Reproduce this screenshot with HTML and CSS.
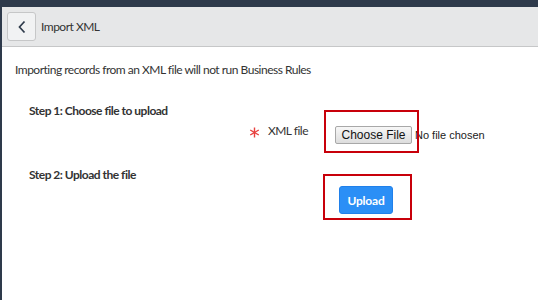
FILE: index.html
```html
<!DOCTYPE html>
<html lang="en">
<head>
  <meta charset="UTF-8">
  <meta name="viewport" content="width=device-width, initial-scale=1.0">
  <title>Import XML</title>
  <link rel="stylesheet" href="styles.css">
</head>
<body>
  <div class="topbar"></div>
  <div class="header">
    <button class="back-button" aria-label="Back">
      <svg width="10" height="14" viewBox="0 0 10 14"><path d="M7.5 1.5 L2.5 7 L7.5 12.5" fill="none" stroke="#2e3a4b" stroke-width="1.7"/></svg>
    </button>
    <span class="title">Import XML</span>
  </div>
  <div class="content">
    <p class="notice">Importing records from an XML file will not run Business Rules</p>
    <div class="step">
      <h4>Step 1: Choose file to upload</h4>
      <div class="field-row">
        <div class="field-label">
          <svg class="required" width="11" height="11" viewBox="0 0 11 11">
            <g stroke="#e8413f" stroke-width="1.4">
              <line x1="5.5" y1="0.5" x2="5.5" y2="10.5"/>
              <line x1="1.2" y1="3" x2="9.8" y2="8"/>
              <line x1="1.2" y1="8" x2="9.8" y2="3"/>
            </g>
          </svg>
          <span>XML file</span>
        </div>
        <div class="field-control">
          <button class="file-button">Choose File</button>
          <span class="file-name">No file chosen</span>
          <div class="highlight highlight-file"></div>
        </div>
      </div>
    </div>
    <div class="step">
      <h4>Step 2: Upload the file</h4>
      <div class="field-row">
        <div class="field-label"></div>
        <div class="field-control upload-control">
          <button class="upload-button">Upload</button>
          <div class="highlight highlight-upload"></div>
        </div>
      </div>
    </div>
  </div>
</body>
</html>
```

FILE: styles.css
```css
body {
  margin: 0;
  height: 300px;
  background: #fff;
  border-left: 2px solid #2e3a4b;
  font-family: 'Lato', sans-serif;
  letter-spacing: -0.5px;
  color: #333;
  box-sizing: border-box;
}
.topbar {
  height: 7px;
  background: #2e3a4b;
}
.header {
  display: flex;
  align-items: center;
  height: 39px;
  padding-left: 5px;
  background: #e6e7e8;
  border-bottom: 1px solid #c6c7c8;
}
.back-button {
  display: flex;
  align-items: center;
  justify-content: center;
  width: 29px;
  height: 29px;
  padding: 0;
  background: #f1f2f3;
  border: 1px solid #c6c7c8;
  border-radius: 3px;
}
.title {
  margin-left: 5px;
  font-size: 12px;
  color: #333;
}
.content {
  padding-left: 13px;
}
.notice {
  margin: 15px 0 0 0;
  font-size: 12px;
  line-height: 16px;
}
.step {
  padding-left: 14px;
}
.step h4 {
  margin: 0;
  font-size: 12px;
  font-weight: 700;
  line-height: 16px;
}
.step:first-of-type h4 {
  margin-top: 25px;
}
.step:last-of-type h4 {
  margin-top: 23px;
}
.field-row {
  display: flex;
}
.field-label {
  display: flex;
  align-items: center;
  justify-content: flex-end;
  width: 279px;
  height: 16px;
  font-size: 12px;
  line-height: 16px;
  margin-top: 4px;
}
.required {
  margin-right: 8px;
  margin-top: 2px;
}
.field-control {
  position: relative;
  display: flex;
  align-items: center;
  margin-left: 27px;
  margin-top: 7px;
  height: 18px;
}
.file-button {
  height: 18px;
  width: 77px;
  padding: 0;
  font-family: 'Liberation Sans', Arial, sans-serif;
  font-size: 12px;
  letter-spacing: 0;
  color: #111;
  background: linear-gradient(to bottom, #f7f7f7, #dddddd);
  border: 1px solid #a8a8a8;
  border-radius: 2px;
}
.file-name {
  margin-left: 3px;
  font-family: 'Liberation Sans', Arial, sans-serif;
  font-size: 11px;
  letter-spacing: 0;
  color: #222;
}
.upload-control {
  margin-left: 31px;
  margin-top: 3px;
  height: 28px;
}
.upload-button {
  height: 28px;
  width: 54px;
  padding: 0;
  font-family: 'Lato', sans-serif;
  font-size: 12px;
  font-weight: 700;
  letter-spacing: -0.2px;
  color: #fff;
  background: #2b8ff6;
  border: 1px solid #2080ea;
  border-radius: 3px;
}
.highlight {
  position: absolute;
  border: 2px solid #c8000a;
}
.highlight-file {
  left: -11px;
  top: -16px;
  width: 91px;
  height: 39px;
}
.highlight-upload {
  left: -16px;
  top: -12px;
  width: 85px;
  height: 42px;
}
```
